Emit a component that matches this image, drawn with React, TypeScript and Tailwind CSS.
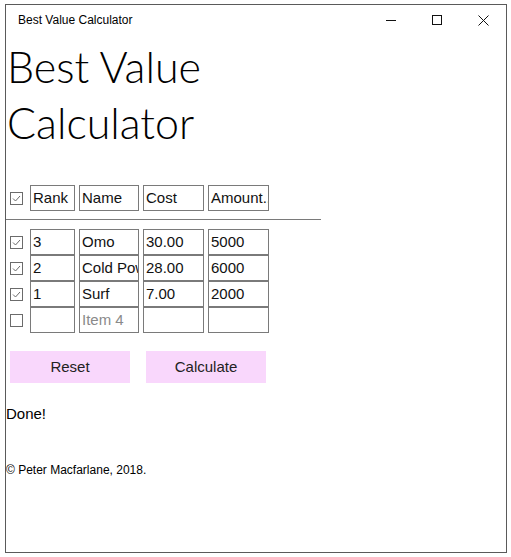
import React from 'react';

const rows = [
  { checked: true, rank: '3', name: 'Omo', cost: '30.00', amount: '5000' },
  { checked: true, rank: '2', name: 'Cold Power', cost: '28.00', amount: '6000' },
  { checked: true, rank: '1', name: 'Surf', cost: '7.00', amount: '2000' },
  { checked: false, rank: '', name: '', cost: '', amount: '' },
];

function Check({ checked }: { checked: boolean }) {
  return (
    <svg width="13" height="13" viewBox="0 0 13 13" className="shrink-0">
      <rect x="0.5" y="0.5" width="12" height="12" fill="white" stroke="#6b6b6b" />
      {checked && <path d="M3 6.5 L5.5 9 L10 4" fill="none" stroke="#6b6b6b" strokeWidth="1" />}
    </svg>
  );
}

function Cell({ w, value, placeholder }: { w: string; value: string; placeholder?: string }) {
  return (
    <div className={`${w} h-[26px] border border-[#7a7a7a] flex items-center px-[2px] overflow-hidden whitespace-nowrap`}>
      {value ? (
        <span className="text-[#111]">{value}</span>
      ) : (
        <span className="text-[#8a8a8a]">{placeholder}</span>
      )}
    </div>
  );
}

export default function App() {
  return (
    <div className="w-[511px] h-[557px] bg-white pl-[5px] pt-[4px]" style={{ fontFamily: '"Liberation Sans", Arial, sans-serif' }}>
      <div className="w-[502px] h-[549px] border border-[#5a5a5a] flex flex-col">
        {/* title bar */}
        <div className="h-[30px] flex items-center justify-between shrink-0">
          <span className="pl-[12px] text-[12px] text-black">Best Value Calculator</span>
          <div className="flex items-center h-full text-[#111]">
            <div className="w-[46px] h-full flex items-center justify-center">
              <svg width="10" height="10" viewBox="0 0 10 10"><path d="M0 5.5 H10" stroke="#111" /></svg>
            </div>
            <div className="w-[46px] h-full flex items-center justify-center">
              <svg width="10" height="10" viewBox="0 0 10 10"><rect x="0.5" y="0.5" width="9" height="9" fill="none" stroke="#111" /></svg>
            </div>
            <div className="w-[46px] h-full flex items-center justify-center">
              <svg width="11" height="11" viewBox="0 0 11 11"><path d="M0.5 0.5 L10.5 10.5 M10.5 0.5 L0.5 10.5" stroke="#111" /></svg>
            </div>
          </div>
        </div>

        {/* heading */}
        <h1 className="pl-[1px] mt-[4px] text-[43px] leading-[56px] font-light text-black" style={{ fontFamily: 'Lato, "Open Sans", sans-serif' }}>
          Best Value
          <br />
          Calculator
        </h1>

        {/* header row */}
        <div className="mt-[34px] flex items-center text-[15px]">
          <div className="w-[24px] flex pl-[4px]"><Check checked /></div>
          <div className="flex gap-[4px]">
            <Cell w="w-[45px]" value="Rank" />
            <Cell w="w-[60px]" value="Name" />
            <Cell w="w-[61px]" value="Cost" />
            <Cell w="w-[61px]" value="Amount..." />
          </div>
        </div>
        <div className="mt-[8px] w-[315px] h-px bg-[#7a7a7a]" />

        {/* data rows */}
        <div className="mt-[9px] flex flex-col text-[15px]">
          {rows.map((r, i) => (
            <div key={i} className="flex items-center">
              <div className="w-[24px] flex pl-[4px]"><Check checked={r.checked} /></div>
              <div className="flex gap-[4px]">
                <Cell w="w-[45px]" value={r.rank} />
                <Cell w="w-[60px]" value={r.name} placeholder={`Item ${i + 1}`} />
                <Cell w="w-[61px]" value={r.cost} />
                <Cell w="w-[61px]" value={r.amount} />
              </div>
            </div>
          ))}
        </div>

        {/* buttons */}
        <div className="mt-[18px] pl-[4px] flex gap-[16px] text-[15px]">
          <button className="w-[120px] h-[32px] bg-[#f9d7fc] text-[#222]">Reset</button>
          <button className="w-[120px] h-[32px] bg-[#f9d7fc] text-[#222]">Calculate</button>
        </div>

        <div className="mt-[20px] text-[15px] text-black">Done!</div>
        <div className="mt-[35px] text-[12px] text-black">© Peter Macfarlane, 2018.</div>
      </div>
    </div>
  );
}
